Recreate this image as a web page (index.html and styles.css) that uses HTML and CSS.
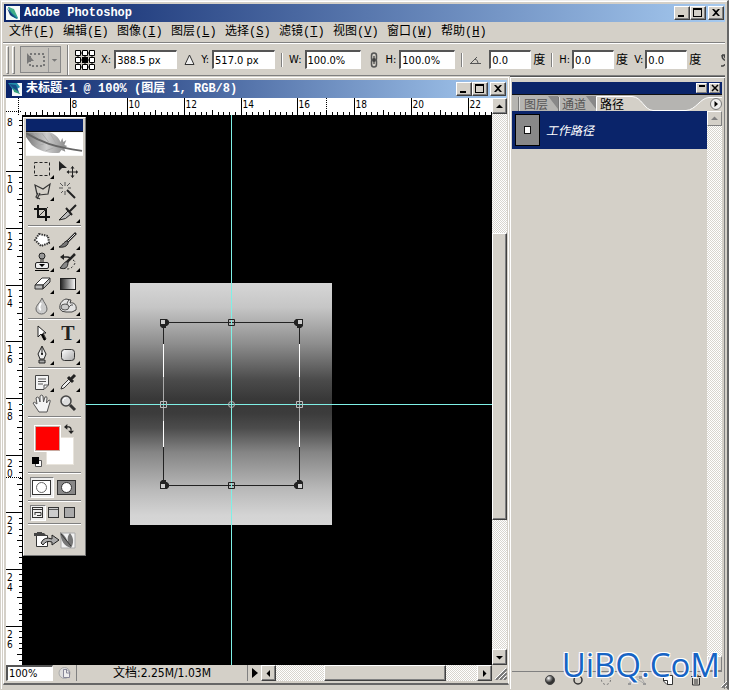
FILE: index.html
```html
<!DOCTYPE html>
<html lang="zh-CN">
<head>
<meta charset="utf-8">
<title>Adobe Photoshop</title>
<link rel="stylesheet" href="styles.css">
</head>
<body>
<div class="app">
  <header class="titlebar">
    <svg class="logo" viewBox="0 0 14 14"><rect width="14" height="14" fill="#f4f8f8"/><path d="M2 1L5 2L12 12L11 13L5 10Z" fill="#16859b"/><path d="M2 1L8 3L12 12L6 7Z" fill="#42ad87"/><path d="M1 2L4 9L11 13L5 7Z" fill="#173b78"/></svg>
    <h1 class="title">Adobe Photoshop</h1>
    <div class="winbtns">
      <button class="winbtn" aria-label="最小化"><svg viewBox="0 0 10 10"><path d="M1 7H7V9H1Z"/></svg></button>
      <button class="winbtn" aria-label="最大化"><svg viewBox="0 0 10 10"><path fill-rule="evenodd" d="M0 0H9V9H0ZM1 2V8H8V2Z"/></svg></button>
      <button class="winbtn close" aria-label="关闭"><svg viewBox="0 0 10 10"><path d="M1 1H3L5 3L7 1H9L6 4.500L9 8H7L5 6L3 8H1L4 4.500Z"/></svg></button>
    </div>
  </header>
  <nav class="menu">
    <button>文件(<u>F</u>)</button><button>编辑(<u>E</u>)</button><button>图像(<u>I</u>)</button><button>图层(<u>L</u>)</button><button>选择(<u>S</u>)</button><button>滤镜(<u>T</u>)</button><button>视图(<u>V</u>)</button><button>窗口(<u>W</u>)</button><button>帮助(<u>H</u>)</button>
  </nav>
  <form class="options">
    <span class="grip"></span><span class="grip"></span>
    <button type="button" class="preset" aria-label="变换"><svg class="preset-icon" viewBox="0 0 26 24"><path d="M5 5V16L8 13L12 13Z" fill="#777"/><path d="M8 6H22V18H8Z" fill="none" stroke="#777" stroke-width="2" stroke-dasharray="2 2"/></svg><svg class="preset-arrow" viewBox="0 0 12 24"><path d="M3 11H9L6 14Z" fill="#777"/></svg></button>
    <span class="rule tall"></span>
    <svg class="refpoint" viewBox="0 0 20 20"><path d="M3 3H17V17H3ZM10 3V17M3 10H17" fill="none" stroke="#000"/><g fill="#fff" stroke="#000"><path d="M.5 .5h5v5h-5zM7.500 .5h5v5h-5zM14.500 .5h5v5h-5zM.5 7.500h5v5h-5zM14.500 7.500h5v5h-5zM.5 14.500h5v5h-5zM7.500 14.500h5v5h-5zM14.500 14.500h5v5h-5z"/></g><path d="M7 7h6v6H7z"/></svg>
    <label class="field">X:<input class="mid" value="388.5 px"></label>
    <svg class="delta" viewBox="0 0 11 12"><path d="M5.500 1L10 10.500H1Z" fill="#eee" stroke="#333"/></svg>
    <label class="field">Y:<input class="mid" value="517.0 px"></label>
    <span class="rule"></span>
    <label class="field">W:<input class="pct" value="100.0%"></label>
    <svg class="chain" viewBox="0 0 8 16"><g fill="none" stroke="#555" stroke-width="1.500"><rect x="1.500" y="1" width="5" height="8" rx="2.500"/><rect x="1.500" y="7" width="5" height="8" rx="2.500"/></g><path d="M4 4V12" stroke="#222"/></svg>
    <label class="field">H:<input class="pct" value="100.0%"></label>
    <span class="rule"></span>
    <svg class="delta" viewBox="0 0 11 12"><path d="M0 9.500H11M1 9L7 3M5 5Q8 6 8 9" fill="none" stroke="#555"/></svg>
    <label class="field"><input class="deg" value="0.0" aria-label="旋转"><span class="unit">度</span></label>
    <span class="rule"></span>
    <label class="field">H:<input class="deg" value="0.0"><span class="unit">度</span></label>
    <label class="field">V:<input class="deg" value="0.0"><span class="unit">度</span></label>
    <svg class="warp" viewBox="0 0 12 16"><path d="M3 3H12M3 3C3 8 6 9 12 9M5 3Q6 7 10 9M2 14H4L10 10M8 12L12 14" fill="none" stroke="#444" stroke-width="1.500"/></svg>
  </form>

  <main class="workspace">
    <section class="doc">
      <header class="titlebar doc-title">
        <svg class="logo" viewBox="0 0 14 14"><path d="M4 1H14V14H4Z" fill="#f4f8f8"/><path d="M0 1H9L12 5L9 7L12 12L5 8Z" fill="#218da9"/><path d="M5 4L12 12L6 10Z" fill="#38a078"/><path d="M1 2L8 3L11 10L5 6Z" fill="#174d86"/></svg>
        <h2 class="title">未标题-1 @ 100% (图层 1, RGB/8)</h2>
        <div class="winbtns">
          <button class="winbtn" aria-label="最小化"><svg viewBox="0 0 10 10"><path d="M1 7H7V9H1Z"/></svg></button>
          <button class="winbtn" aria-label="最大化"><svg viewBox="0 0 10 10"><path fill-rule="evenodd" d="M0 0H9V9H0ZM1 2V8H8V2Z"/></svg></button>
          <button class="winbtn close" aria-label="关闭"><svg viewBox="0 0 10 10"><path d="M1 1H3L5 3L7 1H9L6 4.500L9 8H7L5 6L3 8H1L4 4.500Z"/></svg></button>
        </div>
      </header>
      <div class="view">
        <svg class="corner" viewBox="0 0 16 17"><path d="M12.500 0V17M0 13.500H16" stroke="#000" stroke-dasharray="1 1"/></svg>
        <svg class="hruler" id="hruler"></svg>
        <svg class="vruler" id="vruler"></svg>
        <div class="canvas">
          <svg class="artwork" viewBox="0 0 470 550" width="470" height="550">
            <defs><linearGradient id="metal" x1="0" y1="0" x2="0" y2="1"><stop offset="0" stop-color="#d6d6d6"/><stop offset=".1" stop-color="#c6c6c6"/><stop offset=".25" stop-color="#8e8e8e"/><stop offset=".4" stop-color="#4b4b4b"/><stop offset=".48" stop-color="#383838"/><stop offset=".54" stop-color="#3c3c3c"/><stop offset=".6" stop-color="#4c4c4c"/><stop offset=".7" stop-color="#858585"/><stop offset=".85" stop-color="#b8b8b8"/><stop offset=".96" stop-color="#d4d4d4"/><stop offset="1" stop-color="#d6d6d6"/></linearGradient></defs>
            <rect x="108" y="168" width="202" height="242" fill="url(#metal)"/>
            <g fill="none" stroke="#222"><path d="M141.500 207.500H277.500V370.500H141.500Z"/></g>
            <path d="M141.500 229V332M277.500 229V332" stroke="#fff"/>
            <path d="M141.500 262V306M277.500 262V306" stroke="#aaa"/>
          </svg>
          <span class="guide-v"></span><span class="guide-h"></span>
          <svg class="handles" viewBox="0 0 144 171" width="144" height="171">
            <defs><g id="corner-handle"><path d="M1 1H8L10 3V6L8 8H7V10H3L1 8Z" fill="#222"/><path d="M2 2H6V6H2Z" fill="#ccc"/></g></defs>
            <use href="#corner-handle"/><use href="#corner-handle" transform="matrix(-1 0 0 1 145 0)"/><use href="#corner-handle" transform="matrix(1 0 0 -1 0 172)"/><use href="#corner-handle" transform="matrix(-1 0 0 -1 145 172)"/>
            <g fill="none" stroke="#222"><path d="M69.500 1.500h6v6h-6zM69.500 164.500h6v6h-6z"/></g>
            <g fill="none" stroke="#bbb"><path d="M1.500 83.500h6v6h-6zM137.500 83.500h6v6h-6z"/><circle cx="72.500" cy="86.500" r="3"/></g>
          </svg>
          <aside class="toolbox">
            <div class="toolbar-title"></div>
            <svg class="feather" viewBox="0 0 58 24"><defs><linearGradient id="plume" x1="0" x2="1"><stop offset="0" stop-color="#777"/><stop offset=".5" stop-color="#ccc"/><stop offset="1" stop-color="#888"/></linearGradient></defs><rect width="58" height="24" fill="#fff"/><path d="M0 0H24C30 2 34 6 35 10L37 6L38 10L41 8L39 13L42 14L39 16L40 20L36 18L34 21C26 22 14 20 6 13L0 5Z" fill="url(#plume)"/><path d="M0 1C15 10 28 15 57 19" fill="none" stroke="#666" stroke-width="2"/><path d="M8 1L14 7M16 1L23 10M25 2L31 12M10 14L18 12M20 19L28 16" stroke="#aaa"/></svg>
            <div class="tools">
              <button class="tool fly" aria-label="选框"><svg viewBox="0 0 20 20"><path d="M2.500 3.500H17.500V16.500H2.500Z" fill="none" stroke="#222" stroke-dasharray="3 2"/></svg></button>
              <button class="tool" aria-label="移动"><svg viewBox="0 0 20 20"><path d="M1 2V12L4 9H9Z" fill="#222"/><path d="M14.500 7.500V18.500M9.500 13H19.500" stroke="#222"/><path d="M12.500 9.500L14.500 7L16.500 9.500ZM12.500 16.500L14.500 19L16.500 16.500ZM11 11L8.500 13L11 15ZM18 11L20 13L18 15Z" fill="#222"/></svg></button>
              <button class="tool fly" aria-label="套索"><svg viewBox="0 0 20 20"><path d="M5 13L3 4L11 8L18 3L16 13L7 14M6 12L4 16L8 18M5 18L8 12" fill="none" stroke="#333" stroke-width="1.200"/></svg></button>
              <button class="tool" aria-label="魔棒"><svg viewBox="0 0 20 20"><path d="M9 9L17 17" stroke="#222" stroke-width="2"/><path d="M7 1V5M7 10V14M1 7H5M10 7H13M2 2L5 5M9 5L12 2M3 12L5 10" stroke="#555"/></svg></button>
              <button class="tool" aria-label="裁剪"><svg viewBox="0 0 20 20"><path d="M6 2V14H18M2 6H14V18" fill="none" stroke="#111" stroke-width="2"/><path d="M7 13L16 4" stroke="#333"/></svg></button>
              <button class="tool fly" aria-label="切片"><svg viewBox="0 0 20 20"><path d="M1 17L10 8L13 11Q8 17 1 17Z" fill="#bbb" stroke="#222"/><path d="M8 5L14 12M11 9L18 2" stroke="#222" stroke-width="2"/></svg></button>
            </div>
            <hr class="sep">
            <div class="tools">
              <button class="tool fly" aria-label="修补"><svg viewBox="0 0 20 20"><path d="M7 4L16 6L17 13L9 16L3 10Z" fill="#fff" stroke="#333" stroke-width="2" stroke-dasharray="1.500 1"/></svg></button>
              <button class="tool fly" aria-label="画笔"><svg viewBox="0 0 20 20"><path d="M18 3L9 12" stroke="#222" stroke-width="2.500"/><path d="M17 4L10 11" stroke="#ddd"/><path d="M10 11C7 10 5 15 1 17C7 18 11 15 10 11Z" fill="#777" stroke="#222"/></svg></button>
              <button class="tool fly" aria-label="图章"><svg viewBox="0 0 20 20"><circle cx="10" cy="4" r="3" fill="#999" stroke="#222"/><path d="M9 7V11M11 7V11" stroke="#222"/><rect x="3.500" y="10.500" width="13" height="6" rx="1.500" fill="#eee" stroke="#222"/><path d="M7 12H13L10 15ZM3 18H17V19H3Z"/></svg></button>
              <button class="tool fly" aria-label="历史画笔"><svg viewBox="0 0 20 20"><path d="M17 2L8 11" stroke="#222" stroke-width="2.500"/><path d="M10 10C6 9 5 13 2 16C8 18 10 15 10 10Z" fill="#888" stroke="#222"/><path d="M4 5H9Q11 5 12 6" stroke="#222" fill="none" stroke-width="1.500"/><path d="M6 2V8L2 5Z" fill="#222"/><path d="M15 8Q19 10 15 14Q13 17 9 17" fill="none" stroke="#222" stroke-dasharray="2 2"/></svg></button>
              <button class="tool fly" aria-label="橡皮擦"><svg viewBox="0 0 20 20"><path d="M3 11L10 4H18L11 11Z" fill="#fff" stroke="#333"/><path d="M3 11H11V15H3ZM11 11L18 4V8L11 15Z" fill="#bbb" stroke="#333"/></svg></button>
              <button class="tool fly" aria-label="渐变"><svg viewBox="0 0 20 20"><defs><linearGradient id="ramp"><stop stop-color="#222"/><stop offset="1" stop-color="#fff"/></linearGradient></defs><rect x="2.500" y="4.500" width="15" height="11" fill="url(#ramp)" stroke="#222"/></svg></button>
              <button class="tool fly" aria-label="模糊"><svg viewBox="0 0 20 20"><path d="M10 2C8 7 4 9 4 13A5.500 5 0 0 0 15 13C15 9 12 7 10 2Z" fill="#ccc" stroke="#666"/><path d="M9 7C7 10 7 13 9 14" fill="none" stroke="#fff" stroke-width="2"/></svg></button>
              <button class="tool fly" aria-label="海绵"><svg viewBox="0 0 20 20"><path d="M2 13C1 8 4 4 8 3L13 4L12 7C16 6 19 9 18 14Q15 17 8 16Q3 16 2 13Z" fill="#e4e4e4" stroke="#444"/><ellipse cx="7" cy="11" rx="4" ry="3" fill="#ccc" stroke="#555"/><path d="M11 4Q9 6 9 8M11 11Q13 8 15 9" fill="none" stroke="#555"/></svg></button>
            </div>
            <hr class="sep">
            <div class="tools">
              <button class="tool fly" aria-label="路径选择"><svg viewBox="0 0 20 20"><path d="M6 3V14L9 11L12 17L14 16L11 10H14Z" fill="#fff" stroke="#222"/><path d="M10 11L13 17" stroke="#000" stroke-width="2"/></svg></button>
              <button class="tool fly type" aria-label="文字">T</button>
              <button class="tool fly" aria-label="钢笔"><svg viewBox="0 0 20 20"><path d="M10 1L6 9L8 14H12L14 9Z" fill="#eee" stroke="#222"/><path d="M10 2V9" stroke="#222"/><circle cx="10" cy="9" r="1"/><path d="M7 15H13V18H7Z" fill="#aaa" stroke="#222"/></svg></button>
              <button class="tool fly" aria-label="形状"><svg viewBox="0 0 20 20"><defs><linearGradient id="shine" x2="1" y2="1"><stop stop-color="#fff"/><stop offset="1" stop-color="#aaa"/></linearGradient></defs><rect x="3.500" y="4.500" width="13" height="11" rx="3" fill="url(#shine)" stroke="#333"/></svg></button>
            </div>
            <hr class="sep">
            <div class="tools">
              <button class="tool fly" aria-label="注释"><svg viewBox="0 0 20 20"><path d="M3.500 3.500H16.500V13L12 17.500H3.500Z" fill="#f4f4f4" stroke="#444"/><path d="M6 7H14M6 9.500H14M6 12H11M12 17V13H16" fill="none" stroke="#555"/></svg></button>
              <button class="tool fly" aria-label="吸管"><svg viewBox="0 0 20 20"><path d="M3 17L4 14L11 7L13 9L6 16Z" fill="#eee" stroke="#333"/><path d="M10 5L15 10M12 8L17 3" stroke="#222" stroke-width="3"/></svg></button>
              <button class="tool" aria-label="抓手"><svg viewBox="0 0 20 20"><path d="M7 18L3 12L1 9Q2 7 5 10L4 4Q5 2 7 4L8 8V2Q10 0 11 2L11.500 8L13 3Q15 2 15 4L14.500 9L17 6Q19 6 18 8L15 18Z" fill="#f4f4f4" stroke="#555"/></svg></button>
              <button class="tool" aria-label="缩放"><svg viewBox="0 0 20 20"><circle cx="8" cy="7" r="5" fill="#ddd" stroke="#444" stroke-width="1.500"/><path d="M12 11L17 16" stroke="#333" stroke-width="3"/><path d="M5 7Q5 4 8 4" fill="none" stroke="#fff"/></svg></button>
            </div>
            <hr class="sep">
            <div class="swatches">
              <button class="swatch back" aria-label="背景色"></button>
              <button class="swatch fore" aria-label="前景色"></button>
              <button class="swap" aria-label="切换"><svg viewBox="0 0 12 12"><path d="M3 3.500H6Q8.500 4 8.500 7V8" fill="none" stroke="#222" stroke-width="1.500"/><path d="M4 0V7L0 3.500ZM5 8H12L8.500 12Z" fill="#222"/></svg></button>
              <button class="defaults" aria-label="默认"><svg viewBox="0 0 10 10"><path d="M3.500 3.500H9.500V9.500H3.500Z" fill="#fff" stroke="#555"/><path d="M0 0H7V7H0Z"/></svg></button>
            </div>
            <hr class="sep">
            <div class="modes">
              <button class="mode pressed" aria-label="标准"><svg viewBox="0 0 22 18"><rect x="1.500" y="1.500" width="18" height="14" fill="#fff" stroke="#333"/><circle cx="10.500" cy="8.500" r="5" fill="#fff" stroke="#666"/></svg></button>
              <button class="mode" aria-label="快速蒙版"><svg viewBox="0 0 22 18"><rect x="1.500" y="1.500" width="18" height="14" fill="#888" stroke="#333"/><circle cx="10.500" cy="8.500" r="5" fill="#fff" stroke="#333"/></svg></button>
            </div>
            <hr class="sep">
            <div class="screens">
              <button class="screen pressed" aria-label="标准屏幕"><svg viewBox="0 0 12 12"><rect x=".5" y=".5" width="10" height="10" fill="#eee" stroke="#333"/><path d="M1 2.500H10M3 5.500H9V8.500H5M3 5V8" fill="none" stroke="#333"/></svg></button>
              <button class="screen" aria-label="带菜单全屏"><svg viewBox="0 0 12 12"><rect x=".5" y=".5" width="10" height="10" fill="#ccc" stroke="#333"/><path d="M1 2.500H10" stroke="#555"/></svg></button>
              <button class="screen" aria-label="全屏"><svg viewBox="0 0 12 12"><rect x=".5" y=".5" width="10" height="10" fill="#aaa" stroke="#333"/></svg></button>
            </div>
            <hr class="sep">
            <button class="jump" aria-label="ImageReady"><svg viewBox="0 0 44 18"><path d="M3.500 4.500H14.500V15.500H3.500Z" fill="#fff" stroke="#333"/><path d="M1 2H11L14 5H1ZM4 1H9V3H4Z" fill="#444"/><path d="M8 12Q11 5 19 8V4L26 9L19 14V11Q13 9 10 14Z" fill="#aaa" stroke="#222"/><path d="M28 2H42V17H28Z" fill="#f2f2f2" stroke="#aaa"/><path d="M27 1C32 4 33 7 35 11C34 7 35 4 37 2C41 7 41 12 38 17C31 15 28 10 27 1Z" fill="#777"/><path d="M28 3L38 15" stroke="#333"/></svg></button>
          </aside>
        </div>
        <div class="vscroll">
          <button class="sbtn" aria-label="向上"><svg viewBox="0 0 7 7"><path d="M0 5H7L3.500 1.500Z"/></svg></button>
          <span class="vspace-a"></span><span class="thumb vthumb"></span><span class="vspace-b"></span>
          <button class="sbtn" aria-label="向下"><svg viewBox="0 0 7 7"><path d="M0 2H7L3.500 5.500Z"/></svg></button>
        </div>
      </div>
      <footer class="status">
        <input class="zoom" value="100%" aria-label="缩放比例">
        <svg class="clock" viewBox="0 0 14 14"><circle cx="6.500" cy="7" r="5.500" fill="#ddd" stroke="#aaa"/><path d="M5.500 3.500H9L11.500 6V11.500H5.500Z" fill="#eee" stroke="#889"/><path d="M8.500 4V7H11" fill="none" stroke="#889"/></svg>
        <span class="info">文档:2.25M/1.03M</span>
        <button class="more" aria-label="更多"><svg viewBox="0 0 6 10"><path d="M0 0V10L6 5Z"/></svg></button>
        <div class="hscroll">
          <button class="sbtn" aria-label="向左"><svg viewBox="0 0 7 7"><path d="M5 0V7L1.500 3.500Z"/></svg></button>
          <span class="hspace-a"></span><span class="thumb hthumb"></span><span class="hspace-b"></span>
          <button class="sbtn" aria-label="向右"><svg viewBox="0 0 7 7"><path d="M2 0V7L5.500 3.500Z"/></svg></button>
        </div>
        <svg class="sizer" viewBox="0 0 15 15"><path d="M4 15L15 4M8 15L15 8M12 15L15 12" stroke="#777" stroke-width="2"/><path d="M3 14L14 3M7 14L14 7M11 14L14 11" stroke="#fff"/></svg>
      </footer>
    </section>

    <aside class="panel">
      <div class="panel-title">
        <button class="minibtn" aria-label="折叠"><svg viewBox="0 0 8 8"><path d="M1 1H7V3H1Z"/></svg></button>
        <button class="minibtn" aria-label="关闭"><svg viewBox="0 0 8 8"><path d="M1 1L7 7M7 1L1 7" stroke="#000" stroke-width="1.500"/></svg></button>
      </div>
      <div class="tabs">
        <svg class="tabshape" viewBox="0 0 210 16"><path d="M6.500 2V16M46.500 2V16" stroke="#777"/><path d="M7.500 2V16M47.500 2V16" stroke="#ddd"/><path d="M36 1L46 14V1ZM74 1L84 14V1Z" fill="#888"/><path d="M84 16V1.500H120C130 2 132 15 141 15.500H174C184 15 188 3 197 2.500H210V16Z" fill="#d4d0c8"/><path d="M84.500 16V1.500H120C130 2 132 15 141 15.500H174C184 15 188 3 197 2.500H210" fill="none" stroke="#fff"/></svg>
        <button class="tab">图层</button><button class="tab">通道</button><button class="tab active">路径</button>
        <button class="flyout" aria-label="面板菜单"><svg viewBox="0 0 12 12"><circle cx="6" cy="6" r="5.500" fill="#eee" stroke="#777"/><path d="M4.500 3V9L8 6Z"/></svg></button>
      </div>
      <div class="panel-body">
        <div class="paths">
          <div class="path-row"><span class="thumbnail"><i class="dot"></i></span><em>工作路径</em></div>
        </div>
        <div class="vscroll">
          <button class="sbtn off" aria-label="向上"><svg viewBox="0 0 7 7"><path d="M0 5H7L3.500 1.500Z"/></svg></button>
          <span class="vspace-a"></span>
          <button class="sbtn off" aria-label="向下"><svg viewBox="0 0 7 7"><path d="M0 2H7L3.500 5.500Z"/></svg></button>
        </div>
      </div>
      <footer class="panel-foot">
        <button aria-label="填充"><svg viewBox="0 0 12 12"><defs><radialGradient id="ball" cx=".35" cy=".3"><stop stop-color="#fff"/><stop offset=".6" stop-color="#777"/><stop offset="1" stop-color="#333"/></radialGradient></defs><circle cx="6" cy="6" r="4.500" fill="url(#ball)" stroke="#444"/></svg></button>
        <button aria-label="描边"><svg viewBox="0 0 12 12"><circle cx="6" cy="6" r="4" fill="none" stroke="#333" stroke-width="1.500"/></svg></button>
        <button aria-label="载入选区"><svg viewBox="0 0 12 12"><circle cx="6" cy="6" r="4.500" fill="none" stroke="#777" stroke-dasharray="2 2"/></svg></button>
        <button class="long" aria-label="生成路径"><svg viewBox="0 0 18 12"><path d="M1 10L5 3H13L17 10M1 10L9 5L17 10" fill="none" stroke="#aaa"/><path d="M4 2h3v3H4zM11 2h3v3h-3zM0 9h3v2H0zM15 9h3v2h-3z" fill="#999"/></svg></button>
        <button aria-label="新建路径"><svg viewBox="0 0 12 12"><path d="M1.500 1.500H10.500V10.500H5L1.500 7Z" fill="#fff" stroke="#333"/><path d="M2 6.500H5.500V10" fill="none" stroke="#333"/></svg></button>
        <button aria-label="删除"><svg viewBox="0 0 12 12"><path d="M1 2.500H11M4 2V1H8V2M2.500 4V11H9.500V4M5 5V10M7 5V10" fill="none" stroke="#333"/></svg></button>
        <svg class="sizer" viewBox="0 0 15 15"><path d="M4 15L15 4M8 15L15 8M12 15L15 12" stroke="#777" stroke-width="2"/><path d="M3 14L14 3M7 14L14 7M11 14L14 11" stroke="#fff"/></svg>
      </footer>
    </aside>
  </main>
  <div class="watermark">UiBQ.CoM</div>
</div>
<script src="rulers.js"></script>
</body>
</html>
```
FILE: styles.css
```css
* { box-sizing: border-box; }
body { margin: 0; font: 11px/14px "DejaVu Sans Condensed", "Noto Sans CJK SC", sans-serif; color: #000; background: #d4d0c8; }
button { padding: 0; border: 0; background: none; color: inherit; font: inherit; display: flex; align-items: center; justify-content: center; }
input { font: inherit; padding: 0 1px; border: 1px solid #fff; border-top: 2px solid #555; border-left: 2px solid #555; border-radius: 0; background: #fff; outline: 0; color: #000; min-width: 0; }
svg { display: block; flex: none; }

.app { position: relative; height: 100vh; overflow: hidden; display: flex; flex-direction: column; padding: 2px 2px 0 2px; border: 1px solid #d4d0c8; border-top: 1px solid #eee; border-right: 2px solid #666; box-shadow: inset 1px 1px #fff; }

.titlebar { flex: none; height: 18px; margin: 1px 0 0 1px; padding: 0 1px 0 2px; display: flex; align-items: center; gap: 4px; background: linear-gradient(90deg, #0a246a, #a6caf0); color: #fff; }
.logo { width: 14px; height: 14px; }
.title { flex: 1; margin: 0; font: bold 12px/16px "Liberation Mono", "Noto Sans CJK SC", monospace; white-space: nowrap; }
.winbtns { display: flex; }
.winbtn { width: 16px; height: 14px; background: #d4d0c8; border: 1px solid #404040; border-top-color: #fff; border-left-color: #fff; box-shadow: inset -1px -1px #808080; }
.winbtn svg { width: 10px; height: 10px; }
.close { margin-left: 2px; }

.menu { flex: none; height: 21px; display: flex; align-items: center; gap: 12px; padding-left: 6px; border-bottom: 1px solid #808080; }
.menu button { width: 42px; white-space: nowrap; font: 12px/16px "Liberation Mono", "Noto Sans CJK SC", monospace; justify-content: flex-start; }

.options { flex: none; height: 33px; padding-left: 3px; display: flex; align-items: center; gap: 6px; border-top: 1px solid #fff; border-bottom: 1px solid #808080; overflow: hidden; }
.grip { flex: none; width: 3px; height: 28px; margin-right: -3px; border: 1px solid #808080; border-top-color: #fff; border-left-color: #fff; }
.preset { flex: none; width: 41px; height: 27px; margin-left: 2px; background: #c4c1bb; border: 1px solid #888; }
.preset-icon { width: 26px; height: 24px; }
.preset-arrow { width: 12px; height: 24px; border-left: 1px solid #999; }
.rule { flex: none; width: 2px; height: 14px; border-left: 1px solid #808080; border-right: 1px solid #fff; }
.tall { height: 30px; }
.refpoint { width: 20px; height: 20px; }
.field { flex: none; display: flex; align-items: center; white-space: nowrap; }
.field input { height: 19px; margin-left: 3px; }
.field .deg { margin: 0 2px; }
.unit { font-size: 12px; }
.mid { width: 63px; }
.pct { width: 56px; }
.deg { width: 42px; }
.delta { width: 11px; height: 12px; margin-left: 1px; }
.chain { width: 8px; height: 16px; margin: 0 2px 0 3px; }
.warp { width: 12px; height: 16px; margin-left: 12px; }

.workspace { flex: 1; min-height: 0; display: flex; padding-top: 1px; }
.doc { flex: 1; min-width: 0; display: flex; flex-direction: column; margin-bottom: 4px; padding: 1px 1px 2px 2px; border: 1px solid #fff; border-bottom: 2px solid #666; }
.doc-title { margin: 1px 0 0; }
.view { flex: 1; min-height: 0; display: grid; grid-template-columns: 16px minmax(0, 1fr) 15px; grid-template-rows: 17px minmax(0, 1fr); }
.corner, .hruler, .vruler { width: 100%; height: 100%; background: #fff; overflow: hidden; }
.vruler { grid-row: 2; grid-column: 1; }
.hruler { grid-row: 1; grid-column: 2; }
.corner { grid-row: 1; grid-column: 1; }
.rulertext { font: 10px "DejaVu Sans Condensed", sans-serif; }
.canvas { grid-row: 2; grid-column: 2; position: relative; background: #000; overflow: hidden; }
.artwork { position: absolute; top: 0; left: 0; }
.guide-v { position: absolute; left: 209px; top: 0; bottom: 0; width: 1px; background: #7ff0e6; }
.guide-h { position: absolute; top: 289px; left: 0; right: 0; height: 1px; background: #7ff0e6; }
.handles { position: absolute; left: 137px; top: 203px; }

.vscroll { display: flex; flex-direction: column; width: 15px; background: repeating-conic-gradient(#fff 0 25%, #d8d5ce 0 50%) 0 0 / 2px 2px; }
.view .vscroll { grid-column: 3; grid-row: 1 / 3; }
.sbtn { flex: none; width: 15px; height: 15px; background: #d4d0c8; border: 1px solid #404040; border-top-color: #fff; border-left-color: #fff; box-shadow: inset -1px -1px #808080; }
.view .sbtn { height: 16px; }
.sbtn svg { width: 7px; height: 7px; }
.off { fill: #808080; border-color: #fff #808080 #808080 #fff; box-shadow: none; }
.thumb { background: #d4d0c8; border: 1px solid #404040; border-top-color: #fff; border-left-color: #fff; box-shadow: inset -1px -1px #808080; }
.vspace-a { flex: 119; }
.vthumb { flex: 287; }
.vspace-b { flex: 129; }
.hspace-a { flex: 48; }
.hthumb { flex: 121; }
.hspace-b { flex: 31; }

.status { flex: none; height: 16px; display: flex; align-items: stretch; }
.zoom { flex: none; width: 47px; }
.clock { width: 14px; height: 14px; margin: 1px 4px 0 5px; }
.info { flex: none; width: 172px; text-align: center; font-size: 12px; line-height: 16px; border-left: 1px solid #808080; border-right: 1px solid #808080; }
.more { flex: none; width: 13px; }
.more svg { width: 6px; height: 10px; }
.hscroll { flex: 1; display: flex; background: repeating-conic-gradient(#fff 0 25%, #d8d5ce 0 50%) 0 0 / 2px 2px; }
.hscroll .sbtn { height: 16px; }
.sizer { width: 15px; height: 15px; margin-left: auto; }

.toolbox { position: absolute; left: 1px; top: 2px; width: 63px; padding: 1px 2px 3px; background: #d4d0c8; border: 1px solid #777; border-top-color: #fff; border-left-color: #fff; }
.toolbar-title { height: 13px; background: #0a246a; border-bottom: 1px solid #111; }
.feather { width: 100%; height: 24px; margin-bottom: 2px; }
.tools { display: grid; grid-template-columns: 26px 26px; grid-auto-rows: 22px; margin-left: 3px; }
.tool { position: relative; }
.tool svg { width: 20px; height: 20px; }
.fly::after { content: ""; position: absolute; right: 1px; bottom: 1px; border: 2px solid #000; border-top-color: transparent; border-left-color: transparent; }
.type { font: bold 20px/20px "Liberation Serif", serif; color: #222; }
.sep { height: 2px; margin: 1px 2px 2px; border: 0; border-top: 1px solid #808080; border-bottom: 1px solid #fff; }
.swatches { position: relative; height: 51px; }
.swatch { position: absolute; width: 28px; height: 28px; border: 1px solid #e8e4dc; }
.fore { left: 8px; top: 5px; width: 27px; height: 27px; background: red; border: 1px solid #fff; outline: 1px solid #c9a9a0; outline-offset: -2px; }
.back { left: 20px; top: 17px; background: #fff; }
.swap { position: absolute; left: 38px; top: 4px; }
.swap svg { width: 10px; height: 10px; }
.defaults { position: absolute; left: 6px; top: 37px; }
.defaults svg { width: 10px; height: 10px; }
.modes { display: flex; gap: 1px; height: 23px; padding-left: 4px; align-items: center; }
.mode { width: 24px; height: 21px; }
.mode svg { width: 22px; height: 18px; }
.pressed { background: #eee; border: 1px solid #fff; border-top-color: #808080; border-left-color: #808080; }
.screens { display: flex; height: 18px; padding-left: 4px; align-items: center; }
.screen { width: 16px; height: 16px; }
.screen svg { width: 12px; height: 12px; }
.jump { width: 100%; height: 25px; }
.jump svg { width: 44px; height: 18px; }

.panel { flex: none; width: 215px; display: flex; flex-direction: column; padding: 4px 3px 1px 1px; margin-left: 1px; border-left: 1px solid #fff; border-top: 1px solid #fff; box-shadow: 0 -1px #555, inset -1px 0 #808080; }
.panel-title { flex: none; height: 13px; background: #0a246a; display: flex; justify-content: flex-end; align-items: center; gap: 2px; padding-right: 2px; border-bottom: 1px solid #111; }
.minibtn { width: 11px; height: 10px; background: #d4d0c8; border: 1px solid #808080; border-top-color: #fff; border-left-color: #fff; }
.minibtn svg { width: 8px; height: 8px; }
.tabs { flex: none; position: relative; height: 16px; background: #b5b4b1; display: flex; align-items: flex-end; gap: 14px; padding-left: 12px; font: 12px/14px "Noto Sans CJK SC", sans-serif; }
.tabshape { position: absolute; left: 0; top: 0; width: 210px; height: 16px; }
.tab { position: relative; width: 24px; height: 14px; color: #555; }
.active { color: #000; }
.flyout { position: relative; height: 14px; margin-left: auto; }
.flyout svg { width: 12px; height: 12px; }
.panel-body { flex: 1; min-height: 0; display: flex; }
.paths { flex: 1; }
.path-row { height: 38px; display: flex; align-items: center; gap: 6px; padding-left: 3px; background: #0a246a; color: #fff; font: 12px/14px "Noto Sans CJK SC", sans-serif; }
.thumbnail { width: 25px; height: 32px; display: flex; align-items: center; justify-content: center; background: #888; border: 1px solid #000; }
.dot { width: 5px; height: 6px; background: #fff; border: 1px solid #111; box-sizing: content-box; }
.panel-foot { flex: none; height: 17px; display: flex; align-items: center; gap: 16px; padding-left: 32px; border-top: 1px solid #808080; }
.panel-foot button svg { width: 12px; height: 12px; }
.panel-foot .long svg { width: 18px; }

.watermark { position: absolute; right: 7px; bottom: 7px; font: 33px/34px "Open Sans", "Noto Sans", sans-serif; color: #1764c4; text-shadow: 1px 1px #fff, -1px -1px #fff, 1px -1px #fff, -1px 1px #fff; }
```
FILE: rulers.js
```js
const NS = "http://www.w3.org/2000/svg";
const STEP = 5.685;

function build(id, depth, origin, cursor, vertical) {
  const svg = document.getElementById(id);
  const box = svg.getBoundingClientRect();
  const length = vertical ? box.height : box.width;
  let d = "";
  for (let i = -10; origin + i * STEP < length; i++) {
    const p = Math.round(origin + i * STEP) + 0.5;
    const size = i % 10 === 0 ? depth : i % 5 === 0 ? 5 : 3;
    d += vertical ? `M${depth - size} ${p}H${depth}` : `M${p} ${depth - size}V${depth}`;
    if (i % 10 === 0 && i >= 0) {
      const label = String(8 + i / 5);
      const parts = vertical ? label.split("") : [label];
      parts.forEach((part, n) => {
        const t = document.createElementNS(NS, "text");
        t.setAttribute("class", "rulertext");
        t.setAttribute("x", vertical ? 1 : p + 1);
        t.setAttribute("y", vertical ? p + 11 + n * 10 : 10);
        t.textContent = part;
        svg.appendChild(t);
      });
    }
  }
  const ticks = document.createElementNS(NS, "path");
  ticks.setAttribute("d", d);
  ticks.setAttribute("stroke", "#000");
  svg.appendChild(ticks);
  const mark = document.createElementNS(NS, "path");
  mark.setAttribute("d", vertical ? `M0 ${cursor}H${depth}` : `M${cursor} 0V${depth}`);
  mark.setAttribute("stroke", "#000");
  mark.setAttribute("stroke-dasharray", "1 1");
  svg.appendChild(mark);
}

build("hruler", 17, 48, 304.5, false);
build("vruler", 16, -1, 362.5, true);
```
